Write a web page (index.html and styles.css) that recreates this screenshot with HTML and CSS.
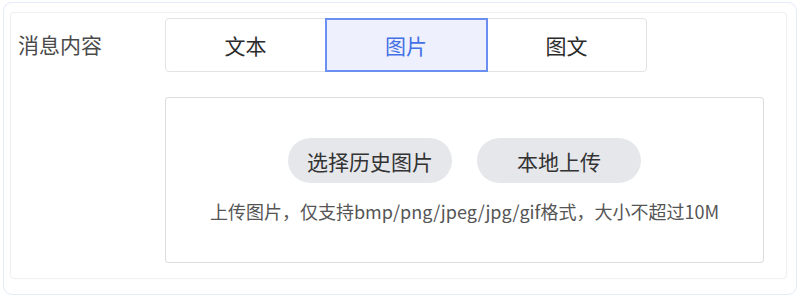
FILE: index.html
```html
<!DOCTYPE html>
<html lang="zh-CN">
<head>
<meta charset="utf-8">
<link rel="stylesheet" href="styles.css">
</head>
<body>
<div class="outer">
  <div class="inner">
    <div class="label">消息内容</div>
    <div class="field">
      <div class="seg">
        <div class="seg-item">文本</div>
        <div class="seg-item active">图片</div>
        <div class="seg-item">图文</div>
      </div>
      <div class="upload">
        <div class="btns">
          <div class="btn">选择历史图片</div>
          <div class="btn">本地上传</div>
        </div>
        <div class="hint">上传图片，仅支持bmp/png/jpeg/jpg/gif格式，大小不超过10M</div>
      </div>
    </div>
  </div>
</div>
</body>
</html>
```
FILE: styles.css
```css
html, body {
  margin: 0;
  padding: 0;
  background: #ffffff;
}
body {
  font-family: "Noto Sans CJK SC", "Noto Sans", sans-serif;
  color: #333333;
}
.outer {
  margin: 2px 0 0 3px;
  width: 794px;
  height: 293px;
  box-sizing: border-box;
  border: 1px solid #e3ebf8;
  border-radius: 9px;
  padding: 9px 9px 15px 6px;
}
.inner {
  height: 100%;
  box-sizing: border-box;
  border: 1px solid #f0f0f2;
  border-radius: 4px;
  box-shadow: 0 0 2px rgba(0,0,0,0.04);
  display: flex;
  padding: 5px 0 0 7px;
}
.label {
  width: 147px;
  font-size: 21px;
  line-height: 52px;
  color: #4a4a4a;
  flex: none;
}
.field {
  display: flex;
  flex-direction: column;
}
.seg {
  display: flex;
  width: 482px;
  height: 54px;
}
.seg-item {
  flex: 1;
  display: flex;
  align-items: center;
  justify-content: center;
  font-size: 21px;
  color: #2b2b2b;
  border: 1.5px solid #e3e3e7;
  margin-left: -1.5px;
  background: #fff;
}
.seg-item:first-child {
  margin-left: 0;
  border-radius: 4px 0 0 4px;
}
.seg-item:last-child {
  border-radius: 0 4px 4px 0;
}
.seg-item.active {
  border: 2px solid #6a8ff0;
  background: #eef0fd;
  color: #4470e6;
  position: relative;
  z-index: 1;
}
.upload {
  margin-top: 25px;
  width: 599px;
  height: 166px;
  box-sizing: border-box;
  border: 1.5px solid #dcdcdf;
  border-radius: 3px;
  display: flex;
  flex-direction: column;
  align-items: center;
  padding-top: 40px;
}
.btns {
  display: flex;
  gap: 25px;
}
.btn {
  width: 164px;
  height: 45px;
  border-radius: 23px;
  background: #e6e7eb;
  display: flex;
  align-items: center;
  justify-content: center;
  font-size: 21px;
  color: #333;
}
.hint {
  margin-top: 16px;
  font-size: 18px;
  line-height: 24px;
  color: #555;
  white-space: nowrap;
}
```
